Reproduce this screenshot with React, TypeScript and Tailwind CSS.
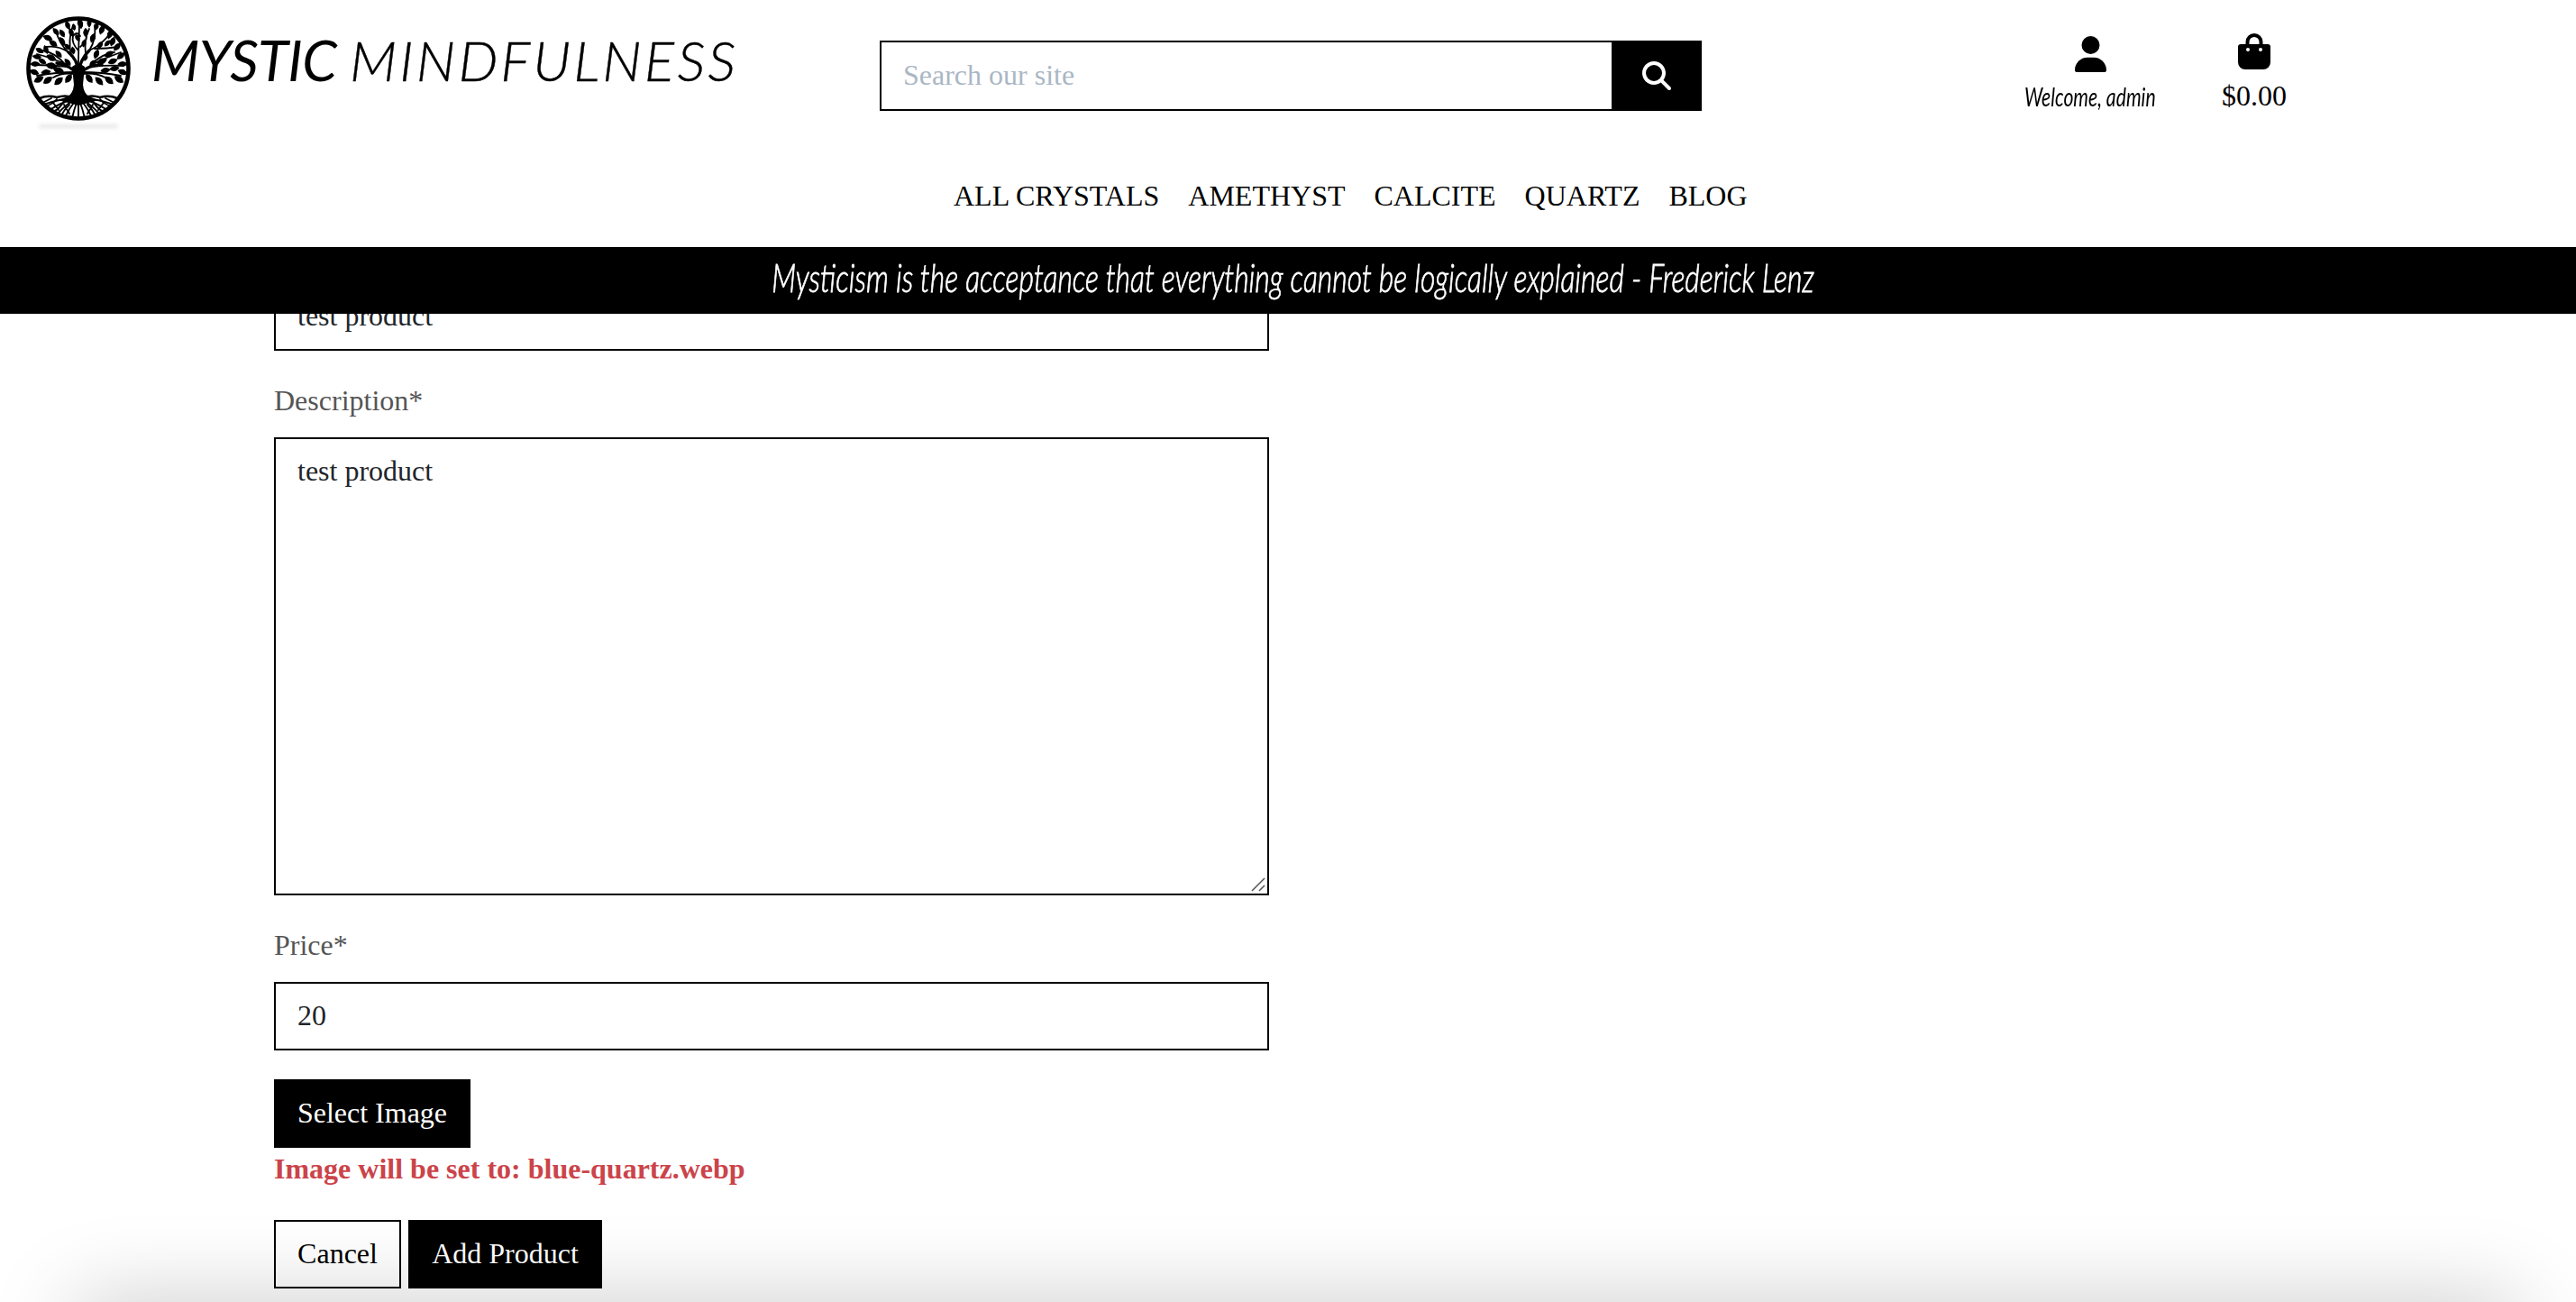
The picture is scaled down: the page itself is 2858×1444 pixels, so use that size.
import { FaUser, FaMagnifyingGlass } from "react-icons/fa6";

type Leaf = [number, number, number, number];

const leaves: Leaf[] = [
  [57, 24, 60, 0.9], [70, 8, 90, 0.9], [46, 10, 70, 1], [33, 17, 50, 1], [24, 24, 20, 1.1],
  [30, 30, 35, 1.1], [15, 38, 30, 1], [22, 37, 70, 1], [40, 28, 60, 1.1], [12, 45, 10, 1],
  [10, 53, 0, 1.1], [9, 62, 20, 1.1], [18, 50, 30, 1], [28, 46, 30, 1.2], [36, 42, 50, 1],
  [14, 70, -30, 1.2], [24, 71, -35, 1.2], [36, 72, -40, 1.2], [47, 69, -55, 1.2], [28, 55, 10, 1.3],
  [36, 60, 15, 1.2], [22, 62, -10, 1.1], [46, 51, 50, 1], [52, 38, 80, 0.9], [50, 18, 70, 1],
  [60, 8, 80, 1.2], [74, 24, 110, 1.1], [84, 15, 110, 1.1], [93, 20, 110, 1.1], [82, 32, 120, 1],
  [90, 30, 130, 0.9], [96, 28, 110, 1.1], [101, 34, 130, 1.1], [92, 42, -30, 1.1], [78, 42, 110, 1.1],
  [74, 52, 140, 1], [84, 50, -20, 1.2], [96, 50, 160, 1.1], [105, 44, -40, 1.1], [107, 53, 0, 1.1],
  [98, 58, 170, 1.1], [107, 62, 20, 1.1], [88, 60, -10, 1.1], [70, 69, 55, 1.2], [81, 72, 45, 1.2],
  [92, 71, 40, 1.2], [103, 70, 35, 1.2], [66, 18, 90, 1], [64, 30, 100, 0.9], [40, 19, 60, 1],
  [78, 11, 100, 0.9], [53, 12, 80, 0.8], [46, 34, 50, 0.9], [66, 46, 110, 0.8],
];

function TreeLogo() {
  return (
    <svg viewBox="0 0 116 116" className="h-[116px] w-[116px]" fill="none" stroke="black" strokeLinecap="round">
      <circle cx="58" cy="58" r="55.5" strokeWidth="4.6" />
      <path fill="black" stroke="none" d="M51 56 Q58 50 65 56 L63 76 Q64 86 70 89 L80 93 L58 99 L36 93 L46 89 Q52 86 53 76 Z" />
      <g strokeWidth="1.800">
        <path strokeWidth="3.400" d="M58 62 Q57 48 47 40 M58 62 Q60 48 70 38 M57 64 Q48 54 34 52 M59 64 Q68 54 84 54" />
        <path d="M58 56 Q58 40 59 10 M47 40 Q38 32 33 17 M47 40 Q36 32 22 34 M50 44 Q46 26 52 10 M58 38 Q50 30 52 22 Q56 16 60 22" />
        <path d="M70 38 Q78 26 76 10 M70 38 Q84 32 94 18 M66 42 Q64 26 70 14 M76 36 Q90 36 102 34 M60 34 Q70 26 66 18" />
        <path d="M46 54 Q28 46 12 42 M46 56 Q28 54 8 54 M54 62 Q34 62 12 66 M54 64 Q40 62 30 68 M44 54 Q32 40 18 38" />
        <path d="M72 54 Q88 46 105 40 M72 56 Q92 54 108 55 M62 62 Q84 62 105 66 M62 64 Q76 62 88 68 M74 52 Q84 42 98 40" />
      </g>
      <g fill="black" stroke="none">
        {leaves.map(([x, y, a, s], i) => (
          <path key={i} transform={`translate(${x} ${y}) rotate(${a}) scale(${s})`} d="M-5.200 0 Q0 -5.600 5.200 0 Q0 5.600 -5.200 0Z" />
        ))}
      </g>
      <g strokeWidth="1.900">
        <path strokeWidth="2.600" d="M15 91 Q24 87 34 90 Q44 87 50 90 M101 91 Q92 87 82 90 Q72 87 66 90" />
        <path d="M52 91 Q36 92 19 98 M52 92 Q38 96 26 104 M54 92 Q44 98 34 109 M55 93 Q48 102 43 112 M57 93 Q53 104 51 113 M58 93 L58 114" />
        <path d="M64 91 Q80 92 97 98 M64 92 Q78 96 90 104 M62 92 Q72 98 82 109 M61 93 Q68 102 73 112 M59 93 Q63 104 65 113" />
        <path d="M34 92 Q30 97 22 100 M42 94 Q38 102 30 106 M48 98 Q42 104 39 110 M82 92 Q86 97 94 100 M74 94 Q78 102 86 106 M68 98 Q74 104 77 110 M28 91 L20 95 M88 91 L96 95 M30 96 L36 104 M86 96 L80 104 M42 98 L48 108 M74 98 L68 108" />
      </g>
    </svg>
  );
}

function BagIcon() {
  return (
    <svg viewBox="0 0 36 40" className="h-10 w-9">
      <path d="M10.500 14 V9.500 a7.500 7.500 0 0 1 15 0 V14" fill="none" stroke="black" strokeWidth="4" />
      <path d="M3 12 H33 a3 3 0 0 1 3 3 V32 a8 8 0 0 1 -8 8 H8 a8 8 0 0 1 -8 -8 V15 a3 3 0 0 1 3 -3Z" />
      <circle cx="11" cy="18" r="2" fill="white" />
      <circle cx="25" cy="18" r="2" fill="white" />
    </svg>
  );
}

const navLinks = ["ALL CRYSTALS", "AMETHYST", "CALCITE", "QUARTZ", "BLOG"];

function Header() {
  return (
    <header className="relative z-10 h-[348px] shrink-0 bg-white">
      <div className="flex h-[184px] items-start">
        <div className="flex w-[976px] items-start">
          <div className="ml-[29px] mt-[18px] h-[126px] w-[116px] shrink-0">
            <TreeLogo />
            <div className="mx-auto mt-1 h-1 w-[88px] rounded-full bg-black/10 blur-[2px]" />
          </div>
          <h1 className="ml-[23px] mt-[30px] flex gap-[18px] whitespace-nowrap font-['Lato'] text-[62px] italic leading-[72px]">
            <span className="w-[202px] font-normal tracking-[-0.6px]">MYSTIC</span>
            <span className="font-light tracking-[3.1px] [-webkit-text-stroke:0.4px_black]">MINDFULNESS</span>
          </h1>
        </div>
        <div className="mt-[45px] flex h-[78px] w-[912px]">
          <input placeholder="Search our site" className="h-full min-w-0 flex-1 border-2 border-r-0 border-black pb-0.5 pl-6 outline-none placeholder:text-[#aab7c4]" />
          <button className="flex w-[100px] items-center justify-center bg-black pb-px pr-px">
            <FaMagnifyingGlass className="size-8 text-white" />
          </button>
        </div>
        <div className="ml-[355px] mt-[37px] flex">
          <div className="flex w-[152px] flex-col items-center pt-[3px]">
            <FaUser className="h-10 w-[35px]" />
            <span className="mt-[5px] origin-center scale-x-[0.73] whitespace-nowrap font-['Lato'] text-[29px] italic leading-[44px]">Welcome, admin</span>
          </div>
          <div className="ml-[70px] flex w-[72px] flex-col items-center">
            <BagIcon />
            <span className="mt-[5px] leading-[48px]">$0.00</span>
          </div>
        </div>
      </div>
      <nav className="flex h-[90px] gap-8 pl-[1058px] pt-[9px]">
        {navLinks.map((l) => (
          <a key={l} className="leading-[48px]">{l}</a>
        ))}
      </nav>
      <div className="flex h-[74px] items-center justify-center bg-black pb-2 pl-2.5 text-white">
        <p className="scale-x-[0.725] whitespace-nowrap font-['Lato'] text-[44px] font-light italic leading-none [-webkit-text-stroke:0.8px_white]">
          Mysticism is the acceptance that everything cannot be logically explained - Frederick Lenz
        </p>
      </div>
    </header>
  );
}

const field = "block w-full border-2 border-black px-6 text-[#212529] outline-none";

export default function App() {
  return (
    <div className="relative flex h-[1444px] w-[2858px] flex-col overflow-hidden bg-white font-['Liberation_Serif',serif] text-[32px] leading-[48px] text-black">
      <Header />
      <form className="-mt-[35px] ml-[304px] w-[1104px]">
        <input defaultValue="test product" className={`${field} h-[76px] pb-0.5`} />
        <label className="mt-[31px] block text-[#555]">Description*</label>
        <div className="relative mt-[17px]">
          <textarea defaultValue="test product" className={`${field} h-[508px] resize-none pt-[11px]`} />
          <svg viewBox="0 0 16 16" className="absolute bottom-1 right-1 size-4" stroke="#555" strokeWidth="1.500">
            <path d="M1 15 L15 1 M9 15 L15 9" />
          </svg>
        </div>
        <label className="mt-[31px] block text-[#555]">Price*</label>
        <input defaultValue="20" className={`${field} mt-[17px] h-[76px] pb-0.5`} />
        <button type="button" className="mt-8 block h-[76px] w-[218px] bg-black pb-0.5 text-white">Select Image</button>
        <p className="-mt-px font-bold text-[#cb444a]">Image will be set to: blue-quartz.webp</p>
        <div className="mt-[33px] flex gap-2">
          <button type="button" className="h-[76px] w-[141px] border-2 border-black pb-0.5">Cancel</button>
          <button type="button" className="h-[76px] w-[215px] bg-black pb-0.5 text-white">Add Product</button>
        </div>
      </form>
      <div className="pointer-events-none absolute left-[84px] right-[64px] top-full h-20 shadow-[0_0_96px_rgba(0,0,0,0.22)]" />
    </div>
  );
}
